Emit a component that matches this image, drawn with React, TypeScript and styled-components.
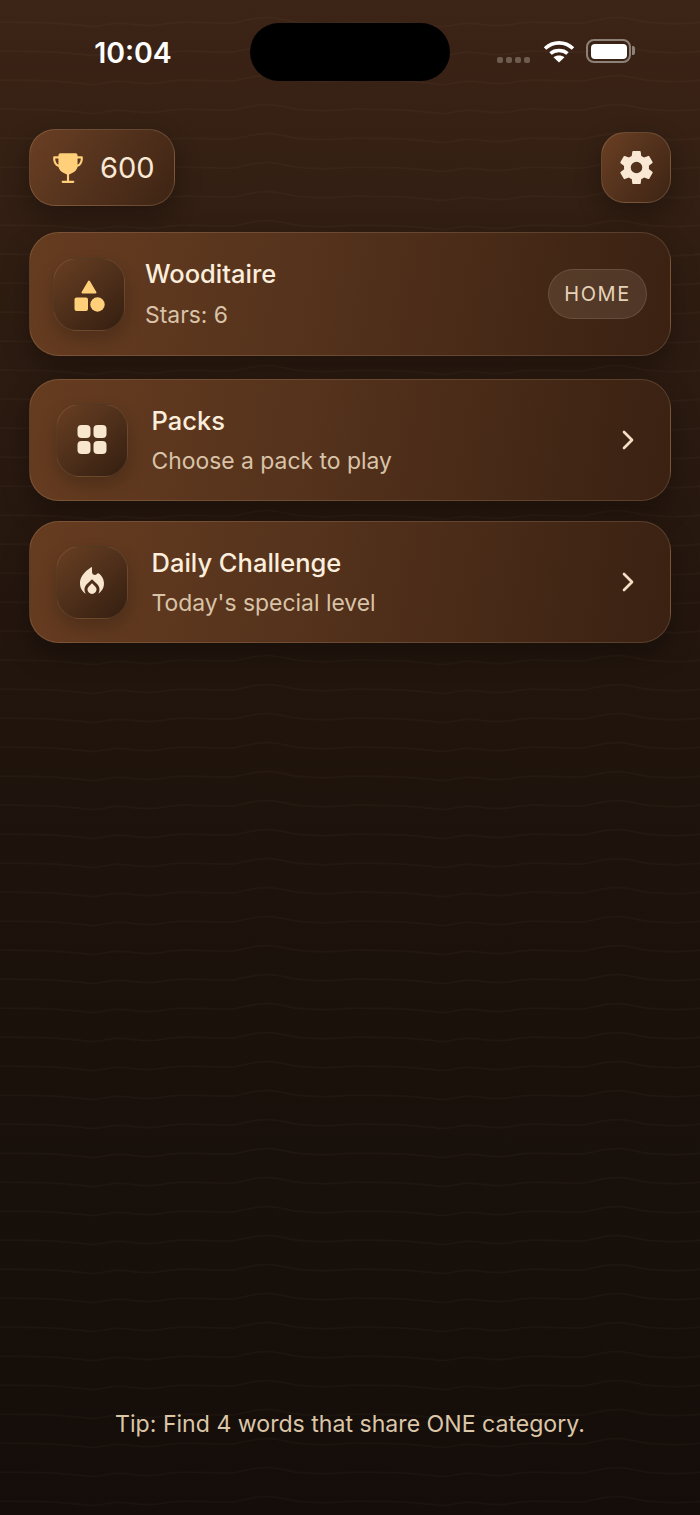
import React from "react";
import styled, { createGlobalStyle } from "styled-components";
import { IoSettingsSharp, IoTrophy } from "react-icons/io5";
import { MdLocalFireDepartment } from "react-icons/md";
import { ChevronRight } from "lucide-react";

const wavePath =
  "M0 22.3C30 22 60 22 90 26.5C100 27 108 23.3 117 23.3C128 23.3 138 25.6 150 25.6C162 25.6 170 22.3 180 22.3C200 22 215 23 233 23C245 21 255 17.4 267 17.4C280 17.4 290 22 300 22.6C320 24.5 335 24 350 22.3";

const waveTile = encodeURIComponent(
  `<svg xmlns="http://www.w3.org/2000/svg" width="350" height="29"><path d="${wavePath}" fill="none" stroke="#ffdcb4" stroke-opacity="0.026" stroke-width="1.5"/></svg>`
);

const GlobalStyle = createGlobalStyle`
  html, body {
    margin: 0;
    padding: 0;
    background: #140d09;
  }

  * {
    box-sizing: border-box;
  }
`;

const Screen = styled.div`
  display: flex;
  flex-direction: column;
  width: 700px;
  height: 1515px;
  overflow: hidden;
  font-family: Inter, "Liberation Sans", sans-serif;
  background-image: url("data:image/svg+xml,${waveTile}"),
    linear-gradient(180deg, #3c2416 0%, #2e1c11 20%, #20140d 48%, #1a110b 70%, #140d09 100%);
`;

const StatusBar = styled.div`
  display: grid;
  grid-template-columns: 250px 200px 250px;
  height: 58px;
  margin-top: 23px;
`;

const Clock = styled.div`
  display: flex;
  align-items: center;
  justify-content: center;
  padding-left: 16px;
  color: #ffffff;
  font-size: 28.5px;
  font-weight: 600;
`;

const Island = styled.div`
  background: #000000;
  border-radius: 29px;
`;

const StatusIcons = styled.div`
  display: flex;
  align-items: center;
  padding-left: 47px;
  margin-top: -2px;
`;

const SignalDots = styled.div`
  display: flex;
  gap: 3px;
  margin-top: 17px;
  margin-right: 13px;
`;

const SignalDot = styled.span`
  width: 6px;
  height: 6px;
  border-radius: 2px;
  background: #6e5c4f;
`;

const Battery = styled.div`
  position: relative;
  width: 45px;
  height: 24px;
  margin-left: 11px;
  padding: 2.5px;
  border: 2px solid #8d8178;
  border-radius: 8px;

  &::before {
    content: "";
    display: block;
    height: 100%;
    border-radius: 4px;
    background: #ffffff;
  }

  &::after {
    content: "";
    position: absolute;
    top: 5px;
    right: -6px;
    width: 3px;
    height: 9px;
    border-radius: 0 2px 2px 0;
    background: #8d8178;
  }
`;

const Content = styled.main`
  display: flex;
  flex: 1;
  flex-direction: column;
  padding: 48px 29px 77px;
`;

const TopRow = styled.div`
  display: flex;
  align-items: center;
  justify-content: space-between;
  margin-bottom: 26px;
`;

const glass = `
  background: linear-gradient(125deg, #6a3f23 0%, #55331d 45%, #3e2414 100%);
  border: 1.5px solid rgba(255, 222, 180, 0.17);
  box-shadow: 0 10px 26px rgba(0, 0, 0, 0.32);
`;

const ScorePill = styled.div`
  ${glass}
  display: flex;
  align-items: center;
  gap: 15px;
  width: 146px;
  height: 77px;
  padding-left: 21px;
  border-radius: 26px;
  color: #f8e8d4;
  font-size: 29px;
  font-weight: 400;

  svg {
    color: #ffcf7a;
  }
`;

const SettingsButton = styled.button`
  ${glass}
  display: flex;
  align-items: center;
  justify-content: center;
  width: 70px;
  height: 71px;
  padding: 0;
  border-radius: 24px;
  color: #f8e8d4;
`;

const CardList = styled.div`
  display: flex;
  flex-direction: column;
  gap: 20px;
`;

const Card = styled.div<{ $hero?: boolean }>`
  display: flex;
  align-items: center;
  gap: ${({ $hero }) => ($hero ? "20px" : "23.5px")};
  height: ${({ $hero }) => ($hero ? "124px" : "122px")};
  margin-bottom: ${({ $hero }) => ($hero ? "3px" : "0")};
  padding: 0 ${({ $hero }) => ($hero ? "23px" : "26px")};
  border-radius: 30px;
  background: linear-gradient(100deg, #663c20 0%, #54321c 45%, #3a2112 100%);
  border: 1.5px solid rgba(255, 222, 180, 0.15);
  box-shadow: 0 12px 28px rgba(0, 0, 0, 0.3);
`;

const IconTile = styled.div`
  display: flex;
  flex: none;
  align-items: center;
  justify-content: center;
  width: 72px;
  height: 73px;
  border-radius: 24px;
  background: linear-gradient(140deg, #683e22 0%, #4e2f1a 50%, #341e10 100%);
  border: 1.5px solid rgba(255, 222, 180, 0.1);
  box-shadow: 0 8px 18px rgba(0, 0, 0, 0.2);
  color: #f8e6cf;
`;

const CardText = styled.div<{ $hero?: boolean }>`
  display: flex;
  flex: 1;
  flex-direction: column;
  gap: ${({ $hero }) => ($hero ? "13px" : "12px")};
`;

const CardTitle = styled.div`
  color: #fbeedd;
  font-size: 25.5px;
  line-height: 30px;
  font-weight: 500;
`;

const CardSubtitle = styled.div`
  color: #d9c3a8;
  font-size: 22.9px;
  line-height: 27px;
`;

const HomeBadge = styled.div`
  display: flex;
  align-items: center;
  justify-content: center;
  width: 99px;
  height: 50px;
  border-radius: 25px;
  background: rgba(255, 235, 215, 0.1);
  border: 1.5px solid rgba(255, 235, 215, 0.12);
  color: #e6d2b8;
  font-size: 20px;
  font-weight: 400;
  letter-spacing: 1.6px;
`;

const Tip = styled.p`
  margin: auto 0 0;
  color: #dcc6a8;
  font-size: 23.1px;
  line-height: 27px;
  text-align: center;
`;

const WifiIcon = () => (
  <svg width="32" height="24" viewBox="0 0 32 24" fill="none" stroke="#ffffff" strokeWidth="3.6">
    <path d="M2 9.5C10 2 22 2 30 9.5" />
    <path d="M7.5 14.5C12 10.5 20 10.5 24.5 14.5" />
    <path d="M16 23.5L10.5 18.2C13.5 15.8 18.5 15.8 21.5 18.2Z" fill="#ffffff" stroke="none" />
  </svg>
);

const ShapesIcon = () => (
  <svg width="36" height="36" viewBox="1 0 36 36" fill="#ffcf7a">
    <path d="M19 5.5L25.5 16.5H12.5Z" stroke="#ffcf7a" strokeWidth="2" strokeLinejoin="round" />
    <rect x="4.5" y="21.5" width="13.5" height="13.5" rx="2" />
    <circle cx="27.5" cy="28.5" r="7.2" />
  </svg>
);

const GridIcon = () => (
  <svg width="30" height="30" viewBox="-0.5 0 30 30" fill="#f8e6cf">
    <rect x="0" y="0" width="13" height="13" rx="4" />
    <rect x="16" y="0" width="13" height="13" rx="4" />
    <rect x="0" y="16" width="13" height="13" rx="4" />
    <rect x="16" y="16" width="13" height="13" rx="4" />
  </svg>
);

export default function App() {
  return (
    <Screen>
      <GlobalStyle />
      <StatusBar>
        <Clock>10:04</Clock>
        <Island />
        <StatusIcons>
          <SignalDots>
            <SignalDot />
            <SignalDot />
            <SignalDot />
            <SignalDot />
          </SignalDots>
          <WifiIcon />
          <Battery />
        </StatusIcons>
      </StatusBar>

      <Content>
        <TopRow>
          <ScorePill>
            <IoTrophy size={34} />
            600
          </ScorePill>
          <SettingsButton>
            <IoSettingsSharp size={37} />
          </SettingsButton>
        </TopRow>

        <CardList>
          <Card $hero>
            <IconTile>
              <ShapesIcon />
            </IconTile>
            <CardText $hero>
              <CardTitle>Wooditaire</CardTitle>
              <CardSubtitle>Stars: 6</CardSubtitle>
            </CardText>
            <HomeBadge>HOME</HomeBadge>
          </Card>

          <Card>
            <IconTile>
              <GridIcon />
            </IconTile>
            <CardText>
              <CardTitle>Packs</CardTitle>
              <CardSubtitle>Choose a pack to play</CardSubtitle>
            </CardText>
            <ChevronRight size={32} color="#f3dfc6" strokeWidth={2} />
          </Card>

          <Card>
            <IconTile>
              <MdLocalFireDepartment size={36} />
            </IconTile>
            <CardText>
              <CardTitle>Daily Challenge</CardTitle>
              <CardSubtitle>Today's special level</CardSubtitle>
            </CardText>
            <ChevronRight size={32} color="#f3dfc6" strokeWidth={2} />
          </Card>
        </CardList>

        <Tip>Tip: Find 4 words that share ONE category.</Tip>
      </Content>
    </Screen>
  );
}
